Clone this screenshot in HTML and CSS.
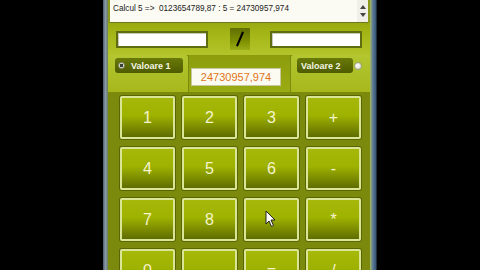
FILE: index.html
```html
<!DOCTYPE html>
<html>
<head>
<meta charset="utf-8">
<link rel="stylesheet" href="styles.css">
</head>
<body>
<div class="win">
  <div class="frame-l"></div>
  <div class="content">
    <div class="top">
      <div class="textarea"><span>Calcul 5 =&gt;&nbsp; 0123654789,87 : 5 = 24730957,974</span></div>
      <div class="scroll">
        <svg width="6" height="4" viewBox="0 0 6 4"><path d="M0 4L3 0L6 4Z" fill="#444"/></svg>
        <svg width="6" height="4" viewBox="0 0 6 4"><path d="M0 0L3 4L6 0Z" fill="#444"/></svg>
      </div>
    </div>
    <div class="inputs">
      <div class="inp"></div>
      <div class="op"><svg width="22" height="22" viewBox="0 0 22 22"><path d="M14 4L8 18" stroke="#000" stroke-width="2.4" stroke-linecap="round"/></svg></div>
      <div class="inp"></div>
    </div>
    <div class="mid">
      <div class="tab tab-l">
        <div class="pill"><span class="radio on"></span><span>Valoare 1</span></div>
      </div>
      <div class="center"><div class="result">24730957,974</div></div>
      <div class="tab tab-r">
        <div class="pill"><span>Valoare 2</span></div><span class="radio off"></span>
      </div>
    </div>
    <div class="grid">
      <div class="key">1</div><div class="key">2</div><div class="key">3</div><div class="key">+</div>
      <div class="key">4</div><div class="key">5</div><div class="key">6</div><div class="key">-</div>
      <div class="key">7</div><div class="key">8</div>
      <div class="key cur-host">
        <svg class="cursor" width="12" height="18" viewBox="0 0 12 18"><path d="M1 1L1 14L4 11L6.5 16.5L8.5 15.5L6 10L10 10Z" fill="#fff" stroke="#222" stroke-width="1"/></svg>
      </div>
      <div class="key">*</div>
      <div class="key">0</div><div class="key">,</div><div class="key">=</div><div class="key">/</div>
    </div>
  </div>
  <div class="frame-r"></div>
</div>
</body>
</html>
```

FILE: styles.css
```css
html, body {
  margin: 0;
  padding: 0;
  background: #000;
  width: 480px;
  height: 270px;
  overflow: hidden;
}
.win {
  margin-left: 103px;
  width: 274px;
  height: 270px;
  display: flex;
}
.frame-l {
  width: 5px;
  background: linear-gradient(90deg, #4a5a6a, #8a9aa8 50%, #6a7a60);
}
.frame-r {
  width: 7px;
  background: linear-gradient(90deg, #a8b860, #5a7a98 40%, #3a5a78 80%, #101820);
}
.content {
  width: 262px;
  height: 270px;
  overflow: hidden;
  background: #7b8a0d;
  display: flex;
  flex-direction: column;
}
.content > * { flex-shrink: 0; }
.top {
  height: 23px;
  display: flex;
  padding: 0 2px 0 2px;
  background: #8a9a1a;
}
.textarea {
  flex: 1;
  background: #fbfbf4;
  border-bottom: 1px solid #6a7820;
  font-family: "Liberation Sans", Arial, sans-serif;
  font-size: 8.2px;
  color: #1a1a1a;
  padding: 4px 0 0 3px;
  white-space: nowrap;
  overflow: hidden;
}
.scroll {
  width: 11px;
  background: #f0f0e8;
  border-bottom: 1px solid #6a7820;
  display: flex;
  flex-direction: column;
  align-items: center;
  justify-content: center;
  gap: 4px;
}
.inputs {
  height: 32px;
  display: flex;
  align-items: center;
  background: linear-gradient(#98aa10, #a6b818 40%, #b2c42a);
  padding-left: 8px;
}
.inp {
  width: 88px;
  height: 13px;
  background: #fff;
  border: 2px solid #5f6c10;
  box-shadow: inset 1px 1px 0 #c8c8b8;
}
.op {
  width: 20px;
  height: 22px;
  margin: 0 20px 0 22px;
  background: linear-gradient(#5f6e00, #7f9000 60%, #9aae18);
  display: flex;
  align-items: center;
  justify-content: center;
}
.op svg { display: block; }
.mid {
  height: 37px;
  display: flex;
}
.tab {
  background: linear-gradient(#b4c630, #a6b81c);
  display: flex;
  align-items: flex-start;
}
.tab-l {
  width: 81px;
  padding-left: 7px;
  padding-top: 3px;
  box-sizing: border-box;
  border-right: 1px solid #7c8a10;
  border-top-right-radius: 3px;
}
.tab-r {
  width: 80px;
  padding-left: 6px;
  padding-top: 3px;
  box-sizing: border-box;
  border-left: 1px solid #7c8a10;
  border-top-left-radius: 3px;
  gap: 1px;
}
.center {
  flex: 1;
  background: linear-gradient(#8c9c0c, #9aac14);
  padding: 13px 0 0 2px;
}
.result {
  width: 88px;
  height: 16px;
  background: #fbfbf2;
  border: 1px solid #c8c8a0;
  color: #e27418;
  font-family: "Liberation Sans", Arial, sans-serif;
  font-size: 11px;
  line-height: 16px;
  text-align: center;
}
.pill {
  height: 15px;
  display: flex;
  align-items: center;
  gap: 4px;
  padding: 0 4px;
  border-radius: 3px;
  background: linear-gradient(#6a7a08, #4e5c00);
  color: #f4f6e4;
  font-family: "Liberation Sans", Arial, sans-serif;
  font-weight: bold;
  font-size: 9px;
}
.tab-l .pill { width: 68px; box-sizing: border-box; padding-left: 3px; gap: 6px; }
.tab-r .pill { width: 56px; box-sizing: border-box; }
.radio {
  width: 7px;
  height: 7px;
  border-radius: 50%;
  box-sizing: border-box;
}
.radio.on {
  background: radial-gradient(circle, #3a4030 0 1.5px, #d8dccc 2px);
  border: 1px solid #8a9080;
}
.radio.off {
  width: 8px;
  height: 8px;
  margin-top: 4px;
  background: radial-gradient(circle at 40% 40%, #ffffff, #d0d4c0);
  border: 1px solid #9aa080;
}
.grid {
  margin-top: 4px;
  padding-left: 12px;
  display: grid;
  grid-template-columns: repeat(4, 55px);
  grid-auto-rows: 43px;
  column-gap: 7px;
  row-gap: 8px;
}
.key {
  box-sizing: border-box;
  border: 2px solid #dbe596;
  border-radius: 2px;
  box-shadow: 0 0 0 1px #5a6604;
  background: linear-gradient(#a6b80a, #9eb200 45%, #7c8c00 75%, #5e6c00);
  color: #f6f4cc;
  font-family: "Liberation Sans", Arial, sans-serif;
  font-size: 16px;
  display: flex;
  align-items: center;
  justify-content: center;
  position: relative;
}
.cursor {
  position: absolute;
  left: 19px;
  top: 10px;
}
```
